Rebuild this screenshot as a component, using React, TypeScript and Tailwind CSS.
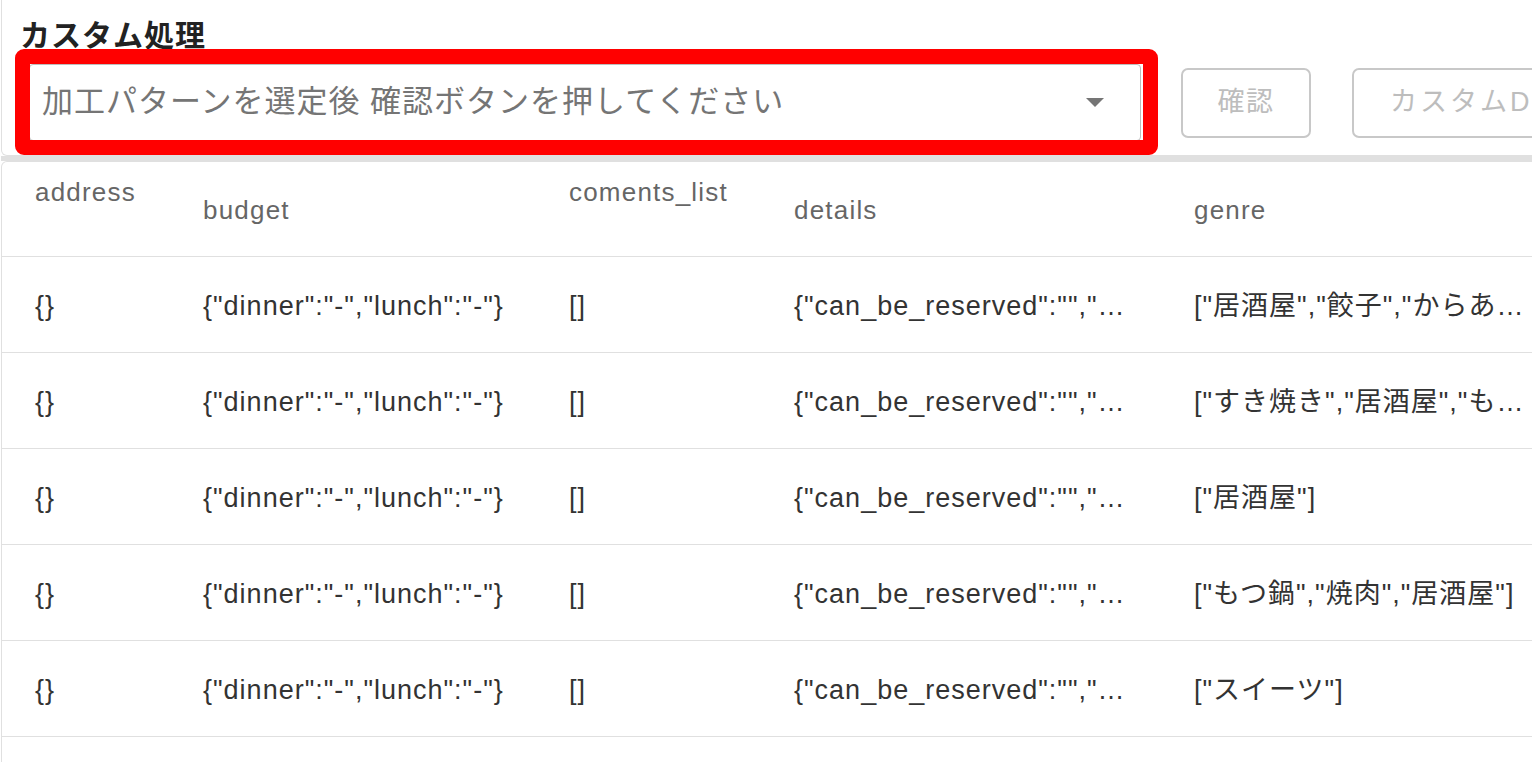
const rows = [
  { address: '{}', budget: '{"dinner":"-","lunch":"-"}', comments: '[]', details: '{"can_be_reserved":"","…', genre: '["居酒屋","餃子","からあ…' },
  { address: '{}', budget: '{"dinner":"-","lunch":"-"}', comments: '[]', details: '{"can_be_reserved":"","…', genre: '["すき焼き","居酒屋","も…' },
  { address: '{}', budget: '{"dinner":"-","lunch":"-"}', comments: '[]', details: '{"can_be_reserved":"","…', genre: '["居酒屋"]' },
  { address: '{}', budget: '{"dinner":"-","lunch":"-"}', comments: '[]', details: '{"can_be_reserved":"","…', genre: '["もつ鍋","焼肉","居酒屋"]' },
  { address: '{}', budget: '{"dinner":"-","lunch":"-"}', comments: '[]', details: '{"can_be_reserved":"","…', genre: '["スイーツ"]' },
];

const cols = 'grid grid-cols-[168px_366px_225px_400px_1fr] pl-[33px]';

export default function App() {
  return (
    <div className="w-[1532px] h-[762px] overflow-hidden bg-white font-['Liberation_Sans','Noto_Sans_CJK_JP',sans-serif] pl-px">
      <div className="w-[1700px] border border-t-0 border-[#e0e0e0] rounded-b-md pl-[18px] pt-[18px] pb-[14px]">
        <h2 className="text-[30px] leading-[36px] font-bold tracking-[1px] text-[#222]">カスタム処理</h2>
        <div className="flex items-center mt-[10px] pl-[9px] whitespace-nowrap">
          <div className="relative w-[1112px] h-[77px] shrink-0 border border-[#bdbdbd] rounded-[4px] bg-white flex items-center pl-[12px] pr-[36px]">
            <span className="flex-1 text-[31px] tracking-[1px] text-[#757575]">加工パターンを選定後 確認ボタンを押してください</span>
            <svg width="18" height="9" viewBox="0 0 18 9" className="shrink-0">
              <path d="M0 0h18L9 9z" fill="#757575" />
            </svg>
            <div className="absolute -top-[16px] -left-[15px] -right-[18px] -bottom-[15px] border-[15px] border-[#ff0000] rounded-[9px] pointer-events-none" />
          </div>
          <button className="ml-[40px] shrink-0 w-[130px] h-[70px] border-2 border-[#c8c8c8] rounded-[7px] text-[27px] tracking-[1.5px] text-[#bdbdbd]">確認</button>
          <button className="ml-[41px] shrink-0 h-[70px] px-[36px] border-2 border-[#c8c8c8] rounded-[7px] text-[27px] tracking-[3px] text-[#bdbdbd]">カスタムDB保存</button>
        </div>
      </div>

      <div className="w-[1700px] h-[5px] bg-[#e0e0e0]" />

      <div className="w-[1700px] border border-b-0 border-[#e0e0e0] rounded-t-md">
        <div className={`${cols} h-[95px] border-b border-[#e0e0e0] text-[26px] leading-[30px] tracking-[1.2px] text-[#666]`}>
          <div className="pt-[15px]">address</div>
          <div className="pt-[33px]">budget</div>
          <div className="pt-[15px]">coments_list</div>
          <div className="pt-[33px]">details</div>
          <div className="pt-[33px]">genre</div>
        </div>
        {rows.map((r, i) => (
          <div key={i} className={`${cols} h-[96px] pt-[4px] items-center border-b border-[#e0e0e0] text-[27px] tracking-[1px] text-[#333] whitespace-nowrap`}>
            <div>{r.address}</div>
            <div>{r.budget}</div>
            <div>{r.comments}</div>
            <div>{r.details}</div>
            <div>{r.genre}</div>
          </div>
        ))}
        <div className={`${cols} h-[96px]`} />
      </div>
    </div>
  );
}
